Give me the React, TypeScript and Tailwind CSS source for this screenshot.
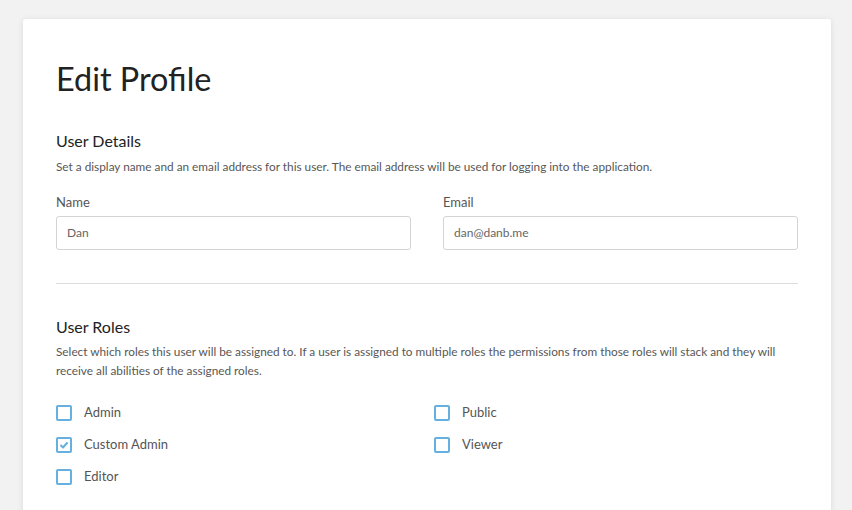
import React from 'react'

const roles = [
  { name: 'Admin', checked: false },
  { name: 'Public', checked: false },
  { name: 'Custom Admin', checked: true },
  { name: 'Viewer', checked: false },
  { name: 'Editor', checked: false },
]

function Checkbox({ checked }: { checked: boolean }) {
  return (
    <span className="flex h-4 w-4 shrink-0 items-center justify-center rounded-[2px] border-2 border-[#65b0de] bg-white">
      {checked && (
        <svg width="10" height="10" viewBox="0 0 10 10" fill="none">
          <path d="M2 5.5 L4 7.5 L8 3" stroke="#65b0de" strokeWidth="2" strokeLinecap="round" strokeLinejoin="round" />
        </svg>
      )}
    </span>
  )
}

function Field({ label, value }: { label: string; value: string }) {
  return (
    <div className="flex flex-col">
      <label className="mb-[4px] text-[13px] leading-[19px] text-[#555]">{label}</label>
      <div className="flex h-[34px] items-center rounded-[3px] border border-[#d4d4d4] bg-white px-[10px] text-[12px] text-[#666]">
        {value}
      </div>
    </div>
  )
}

export default function App() {
  return (
    <div className="h-[510px] overflow-hidden bg-[#f2f2f2] pt-[19px] pl-[23px] pr-[21px]" style={{ fontFamily: 'Lato, "Noto Sans", sans-serif' }}>
      <div className="h-[520px] rounded-[3px] bg-white px-[33px] pt-[40px] shadow-[0_1px_6px_rgba(0,0,0,0.1)]">
        <h1 className="text-[32.4px] leading-[40px] font-normal text-[#222]">Edit Profile</h1>

        <section className="mt-[32px]">
          <h2 className="text-[16px] leading-[20px] text-[#222]">User Details</h2>
          <p className="mt-[6px] text-[11.8px] leading-[19px] text-[#575757]">
            Set a display name and an email address for this user. The email address will be used for logging into the application.
          </p>
          <div className="mt-[17px] grid grid-cols-2 gap-[32px]">
            <Field label="Name" value="Dan" />
            <Field label="Email" value="dan@danb.me" />
          </div>
        </section>

        <hr className="mt-[33px] border-0 border-t border-[#ddd]" />

        <section className="mt-[33px]">
          <h2 className="text-[16px] leading-[20px] text-[#222]">User Roles</h2>
          <p className="mt-[5px] text-[11.8px] leading-[19px] text-[#575757]">
            Select which roles this user will be assigned to. If a user is assigned to multiple roles the permissions from those roles will stack and they will receive all abilities of the assigned roles.
          </p>
          <div className="mt-[23px] grid grid-cols-[378px_1fr] gap-y-[13px]">
            {roles.map((role) => (
              <label key={role.name} className="flex h-[19px] items-center gap-[12px] text-[13px] text-[#555]">
                <Checkbox checked={role.checked} />
                <span>{role.name}</span>
              </label>
            ))}
          </div>
        </section>
      </div>
    </div>
  )
}
